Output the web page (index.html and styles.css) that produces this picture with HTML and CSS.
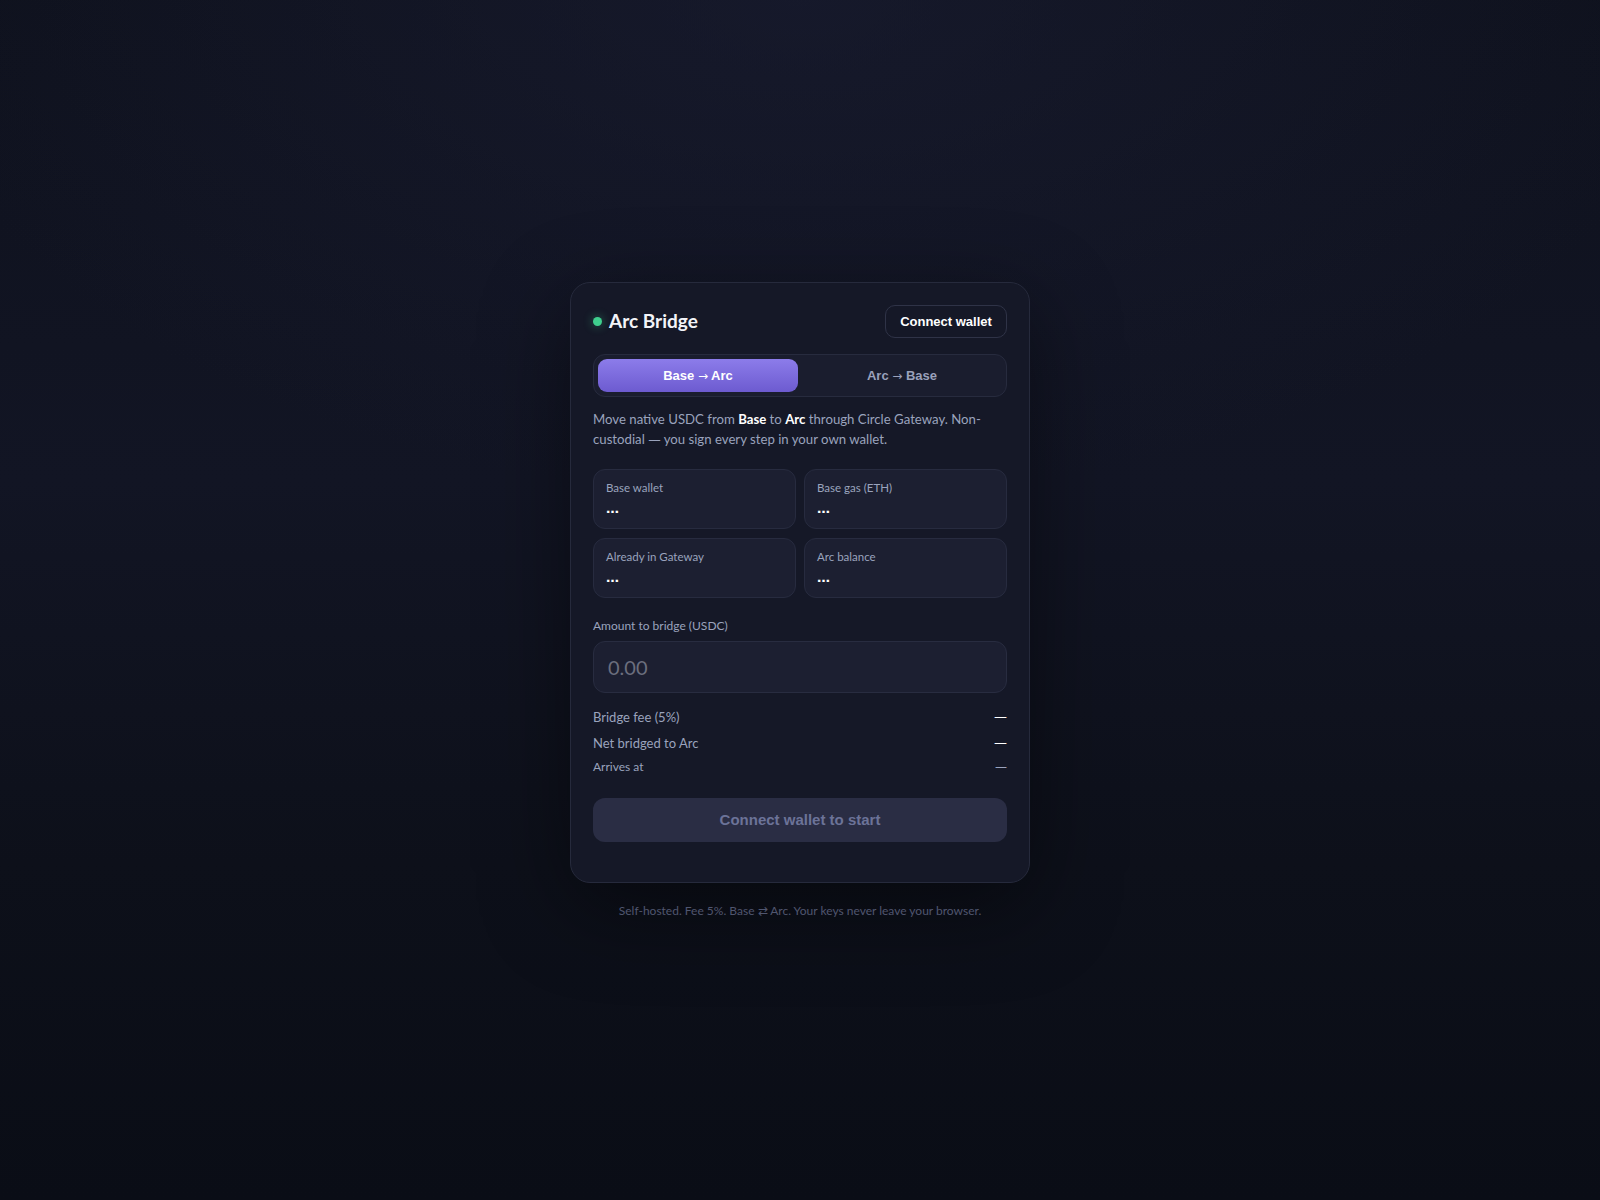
FILE: index.html
```html
<!DOCTYPE html>
<html lang="en">
<head>
<meta charset="utf-8">
<title>Arc Bridge</title>
<link rel="stylesheet" href="styles.css">
</head>
<body>
<main class="page">
  <section class="card">
    <header class="head">
      <div class="brand"><span class="dot"></span><h1 class="title">Arc Bridge</h1></div>
      <button class="btn-connect" type="button">Connect wallet</button>
    </header>
    <div class="tabs">
      <button class="tab tab-active" type="button">Base <span class="arr">→</span> Arc</button>
      <button class="tab" type="button">Arc <span class="arr">→</span> Base</button>
    </div>
    <p class="desc">Move native USDC from <b>Base</b> to <b>Arc</b> through Circle Gateway. Non-custodial <span class="dash">—</span> you sign every step in your own wallet.</p>
    <div class="stats">
      <div class="stat"><div class="stat-label">Base wallet</div><div class="stat-value">…</div></div>
      <div class="stat"><div class="stat-label">Base gas (ETH)</div><div class="stat-value">…</div></div>
      <div class="stat"><div class="stat-label">Already in Gateway</div><div class="stat-value">…</div></div>
      <div class="stat"><div class="stat-label">Arc balance</div><div class="stat-value">…</div></div>
    </div>
    <label class="amount-label" for="amt">Amount to bridge (USDC)</label>
    <input class="amount" id="amt" type="text" placeholder="0.00">
    <div class="rows">
      <div class="row"><span>Bridge fee (5%)</span><span class="val">—</span></div>
      <div class="row"><span>Net bridged to Arc</span><span class="val">—</span></div>
      <div class="row row-small"><span>Arrives at</span><span class="val val-muted">—</span></div>
    </div>
    <button class="btn-start" type="button">Connect wallet to start</button>
  </section>
  <p class="foot">Self-hosted. Fee 5%. Base ⇄ Arc. Your keys never leave your browser.</p>
</main>
</body>
</html>
```

FILE: styles.css
```css
html, body {
  margin: 0;
  padding: 0;
}
body {
  min-height: 100vh;
  background-color: #0c0f19;
  background-image:
    radial-gradient(900px 500px at 50% 0%, rgba(28, 31, 54, 0.55), rgba(28, 31, 54, 0) 100%),
    linear-gradient(180deg, #161a2c 0%, #12152364 0%, #121524 40%, #0d101a 72%, #0a0d16 100%);
  font-family: Lato, "Noto Sans", sans-serif;
  color: #e8eaf2;
}
.page {
  min-height: 100vh;
  display: flex;
  flex-direction: column;
  align-items: center;
  justify-content: center;
}
.card {
  width: 460px;
  box-sizing: border-box;
  padding: 22px 22px 40px;
  background: #151827;
  border: 1px solid #262a3c;
  border-radius: 20px;
  box-shadow: 0 24px 90px rgba(0, 0, 0, 0.45);
}
.head {
  display: flex;
  align-items: center;
  justify-content: space-between;
  height: 33px;
}
.brand {
  display: flex;
  align-items: center;
  gap: 7px;
}
.dot {
  width: 9px;
  height: 9px;
  border-radius: 50%;
  background: #3fcf8e;
  box-shadow: 0 0 8px 2px rgba(63, 207, 142, 0.25);
}
.title {
  margin: 0 0 2px;
  font-size: 19px;
  font-weight: 700;
  color: #f3f4f9;
}
.btn-connect {
  height: 33px;
  width: 122px;
  box-sizing: border-box;
  background: transparent;
  border: 1px solid #2f3347;
  border-radius: 10px;
  color: #ffffff;
  font-family: "Liberation Sans", Arial, sans-serif;
  font-weight: 700;
  font-size: 13px;
  padding: 0;
}
.tabs {
  margin-top: 16px;
  display: grid;
  grid-template-columns: 1fr 1fr;
  gap: 4px;
  padding: 4px;
  background: #1a1d2e;
  border: 1px solid #272b3e;
  border-radius: 12px;
}
.tab {
  height: 33px;
  border: 0;
  border-radius: 9px;
  background: transparent;
  color: #9aa1bb;
  font-family: "Liberation Sans", Arial, sans-serif;
  font-weight: 700;
  font-size: 13px;
}
.arr {
  font-family: "DejaVu Sans", sans-serif;
  font-weight: 400;
  font-size: 12px;
}
.tab-active {
  background: linear-gradient(180deg, #8c7cea 0%, #6d5bd0 100%);
  color: #ffffff;
}
.desc {
  margin: 12px 0 0;
  font-size: 13.2px;
  line-height: 20.5px;
  color: #9aa3bd;
}
.desc b {
  color: #ffffff;
  font-weight: 700;
}
.dash {
  font-family: "DejaVu Sans", sans-serif;
  font-size: 12.5px;
}
.stats {
  margin-top: 18px;
  display: grid;
  grid-template-columns: 1fr 1fr;
  column-gap: 8px;
  row-gap: 9px;
}
.stat {
  height: 60px;
  box-sizing: border-box;
  padding: 10px 12px 0;
  background: #1c1f31;
  border: 1px solid #272b3f;
  border-radius: 12px;
}
.stat-label {
  font-size: 11.5px;
  line-height: 16px;
  color: #9aa3bd;
}
.stat-value {
  margin-top: 4px;
  font-family: "DejaVu Sans", sans-serif;
  font-size: 13px;
  line-height: 18px;
  font-weight: 700;
  color: #ffffff;
}
.amount-label {
  display: block;
  margin-top: 19px;
  font-size: 12px;
  line-height: 17px;
  color: #9aa3bd;
}
.amount {
  display: block;
  margin-top: 7px;
  width: 100%;
  height: 52px;
  box-sizing: border-box;
  padding: 0 14px;
  background: #1c1f31;
  border: 1px solid #282c40;
  border-radius: 12px;
  color: #ffffff;
  font-family: Lato, "Noto Sans", sans-serif;
  font-size: 20px;
  outline: none;
}
.amount::placeholder {
  color: #6b6e7e;
}
.rows {
  margin-top: 14px;
  display: flex;
  flex-direction: column;
  gap: 6px;
}
.row {
  display: flex;
  justify-content: space-between;
  align-items: center;
  font-size: 13px;
  line-height: 20px;
  color: #9aa3bd;
}
.row-small {
  font-size: 12px;
  line-height: 18px;
  margin-top: -1px;
}
.val {
  font-family: "DejaVu Sans", sans-serif;
  color: #ffffff;
}
.val-muted {
  color: #9aa3bd;
}
.btn-start {
  display: block;
  margin-top: 22px;
  width: 100%;
  height: 44px;
  border: 0;
  border-radius: 12px;
  background: #2a2d44;
  color: #6c7398;
  font-family: "Liberation Sans", Arial, sans-serif;
  font-weight: 700;
  font-size: 15px;
}
.foot {
  margin: 20px 0 0;
  font-size: 12px;
  line-height: 16px;
  color: #50566f;
}
```
